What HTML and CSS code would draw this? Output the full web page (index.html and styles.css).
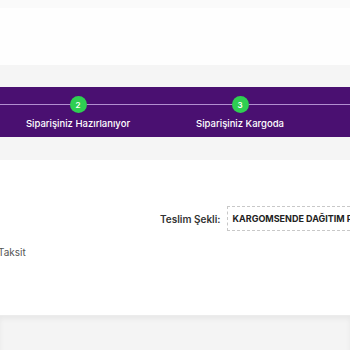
FILE: index.html
```html
<!DOCTYPE html>
<html>
<head>
  <link rel="stylesheet" href="styles.css">
</head>
<body>
  <div class="top-strip"></div>
  <div class="header-space"></div>
  <div class="progress-wrap">
    <div class="progress-band">
      <div class="steps">
        <div class="step">
          <div class="dot">2</div>
          <div class="step-label">Siparişiniz Hazırlanıyor</div>
        </div>
        <div class="step">
          <div class="dot">3</div>
          <div class="step-label">Siparişiniz Kargoda</div>
        </div>
      </div>
    </div>
  </div>
  <div class="details">
    <div class="delivery-row">
      <span class="delivery-label">Teslim Şekli:</span>
      <span class="delivery-value">KARGOMSENDE DAĞITIM PAKETİ</span>
    </div>
    <div class="installment">Taksit</div>
  </div>
  <div class="footer-area"></div>
</body>
</html>
```

FILE: styles.css
```css
body {
  margin: 0;
  background: #fff;
  font-family: Inter, "Noto Sans", sans-serif;
  overflow: hidden;
}

.top-strip {
  height: 8px;
  background: #fafafa;
}

.header-space {
  height: 57px;
  background: #fefefe;
}

.progress-wrap {
  background: #f5f5f5;
  padding: 22px 0 23px;
}

.progress-band {
  height: 50px;
  background: #4a1071;
  overflow: hidden;
  position: relative;
}

.progress-band::before {
  content: "";
  position: absolute;
  left: 0;
  right: 0;
  top: 17px;
  height: 1px;
  background: #b28fd0;
}

.steps {
  display: flex;
  margin-left: -3px;
  position: relative;
}

.step {
  width: 162px;
  flex: none;
  display: flex;
  flex-direction: column;
  align-items: center;
  padding-top: 9px;
}

.dot {
  width: 17px;
  height: 17px;
  border-radius: 50%;
  background: #2fcf52;
  color: #fff;
  font-size: 8px;
  font-weight: 600;
  display: flex;
  align-items: center;
  justify-content: center;
}

.step-label {
  margin-top: 5px;
  color: #fff;
  font-size: 9.5px;
  font-weight: 500;
  white-space: nowrap;
}

.details {
  height: 155px;
  background: #fff;
  overflow: hidden;
}

.delivery-row {
  display: flex;
  align-items: center;
  margin-top: 46px;
  margin-left: 160px;
  white-space: nowrap;
}

.delivery-label {
  font-size: 10px;
  font-weight: 600;
  color: #333;
}

.delivery-value {
  margin-left: 6px;
  border: 1px dashed #c8c8c8;
  padding: 6px 5px;
  font-size: 9px;
  font-weight: 700;
  color: #222;
}

.installment {
  margin-top: 15px;
  margin-left: -2px;
  font-size: 10px;
  color: #555;
}

.footer-area {
  height: 40px;
  background: #f4f4f4;
  box-shadow: inset 0 3px 5px rgba(0, 0, 0, 0.05);
  border-top: 1px solid #ececec;
}
```
